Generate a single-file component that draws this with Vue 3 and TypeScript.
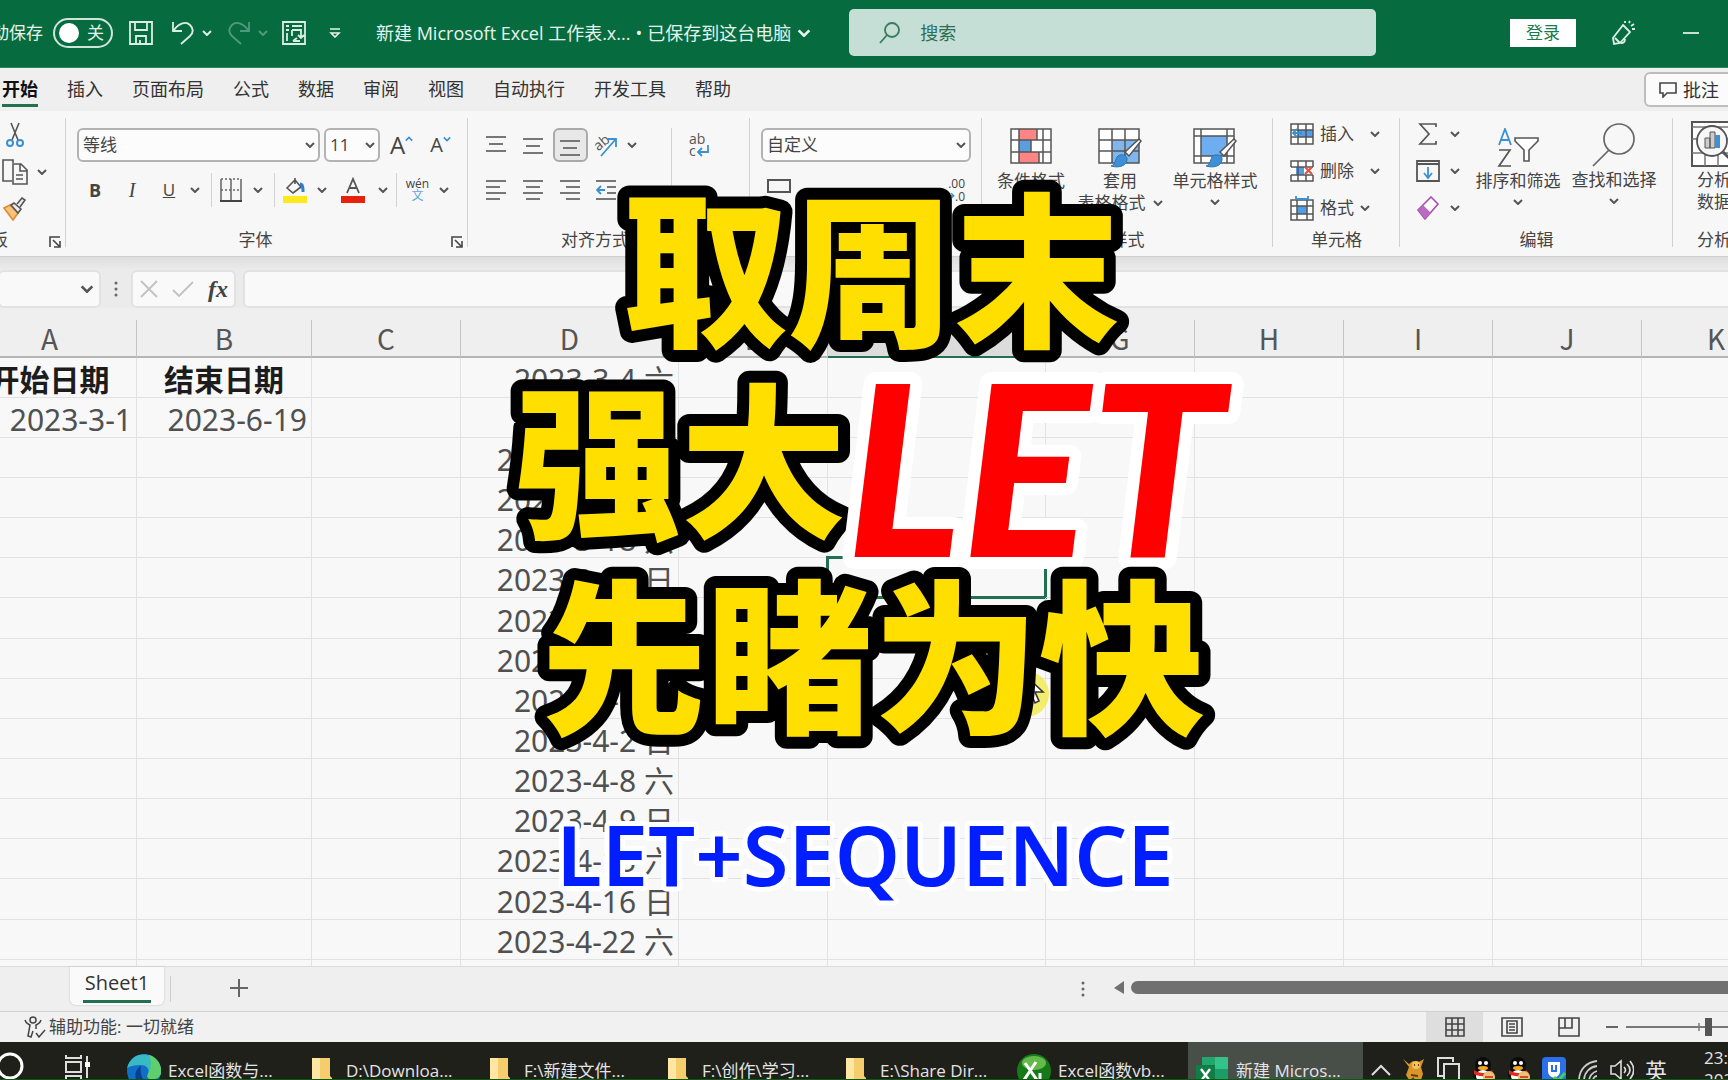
<script setup lang="ts">
import { ref } from 'vue'

interface Row { a?: string; b?: string; d: string }

const tabs: string[] = ['开始', '插入', '页面布局', '公式', '数据', '审阅', '视图', '自动执行', '开发工具', '帮助']
const columns: string[] = ['A', 'B', 'C', 'D', 'E', 'F', 'G', 'H', 'I', 'J', 'K']
const weekends: string[] = [
  '2023-3-4 六', '2023-3-5 日', '2023-3-11 六', '2023-3-12 日', '2023-3-18 六',
  '2023-3-19 日', '2023-3-25 六', '2023-3-26 日', '2023-4-1 六', '2023-4-2 日',
  '2023-4-8 六', '2023-4-9 日', '2023-4-15 六', '2023-4-16 日', '2023-4-22 六'
]
const rows: Row[] = weekends.map((d, i) => ({
  a: i === 0 ? '开始日期' : i === 1 ? '2023-3-1' : '',
  b: i === 0 ? '结束日期' : i === 1 ? '2023-6-19' : '',
  d
}))
const selectedRow = 5
const windows: { kind: string; title: string }[] = [
  { kind: 'edge', title: 'Excel函数与...' },
  { kind: 'folder', title: 'D:\\Downloa...' },
  { kind: 'folder', title: 'F:\\新建文件...' },
  { kind: 'folder', title: 'F:\\创作\\学习...' },
  { kind: 'folder', title: 'E:\\Share Dir...' },
  { kind: 'xl', title: 'Excel函数vb...' },
  { kind: 'excel', title: '新建 Micros...' }
]
const formula = ref('')
const zoom = ref(50)
</script>

<template>
  <div class="app">
    <svg class="defs" aria-hidden="true">
      <symbol id="chev" viewBox="0 0 10 6"><path d="M1 1l4 4 4-4" fill="none" stroke="currentColor" stroke-width="2" /></symbol>
      <symbol id="launch" viewBox="0 0 12 12"><path d="M1 11V1h10M4 4l6 6M11 5v6H5" fill="none" stroke="currentColor" stroke-width="1.6" /></symbol>
      <symbol id="tablebrush" viewBox="0 0 44 40">
        <path d="M27 24l14-13 2 2-12 15z" fill="#fff" stroke="#555" stroke-width="1.5" />
        <path d="M13 38c4-1 4-5 6-9 3-4 9-2 10 1 1 6-6 11-16 8z" fill="#3f8fd6" stroke="#2d75b6" />
      </symbol>
      <symbol id="penguin" viewBox="0 0 24 26">
        <ellipse cx="11" cy="8" rx="8" ry="8" fill="#0b0b0b" /><ellipse cx="11" cy="18" rx="10" ry="9" fill="#111" />
        <circle cx="8" cy="6" r="2" fill="#fff" /><circle cx="14" cy="6" r="2" fill="#fff" />
        <ellipse cx="11" cy="11" rx="5" ry="2" fill="#f5a623" /><ellipse cx="11" cy="19" rx="7" ry="6" fill="#fff" />
        <path d="M2 13c6 4 13 4 18 0l1 3c-6 4-14 4-19 1z" fill="#dd2b20" /><circle cx="17" cy="20" r="6" fill="#f2bd75" /><path d="M13 20h8" stroke="#d24a2a" stroke-width="2" />
      </symbol>
    </svg>

    <header class="titlebar">
      <label class="autosave"><span class="autolabel">自动保存</span>
        <button class="toggle" type="button" aria-label="自动保存"><i></i>关</button></label>
      <button class="tb save" aria-label="保存"><svg width="24" height="24" viewBox="0 0 24 24"><path d="M1 1h22v22H1zM6 1v8h12V1M7 23v-8h10v8M11 23v-4" /></svg></button>
      <button class="tb undo" aria-label="撤消"><svg width="22" height="24" viewBox="0 0 22 24"><path d="M1 1v9h9M2 9C7 2 14 0 18 4s3 8 0 11l-9 8" /></svg></button>
      <svg class="chev"><use href="#chev" /></svg>
      <button class="tb redo dim" aria-label="恢复"><svg width="22" height="24" viewBox="0 0 22 24"><path d="M21 1v9h-9M20 9C15 2 8 0 4 4s-3 8 0 11l9 8" /></svg></button>
      <svg class="chev dim"><use href="#chev" /></svg>
      <button class="tb pivot" aria-label="数据透视表"><svg width="24" height="24" viewBox="0 0 24 24"><path d="M1 1h22v22H1zM4 5h3M10 5h10M4 9h3M5 12v8M10 9h9v8M10 9v6M11 20h7M16 14l3 3 3-3M15 17l-4 3" /></svg></button>
      <svg class="custom" viewBox="0 0 12 10"><path d="M1 1h10M2 5l4 4 4-4z" fill="none" stroke="currentColor" stroke-width="1.6" /></svg>
      <h1 class="doc">新建 Microsoft Excel 工作表.x...<span>•</span>已保存到这台电脑</h1>
      <svg class="docchev"><use href="#chev" /></svg>
      <label class="search">
        <svg width="22" height="22" viewBox="0 0 22 22"><circle cx="13" cy="8" r="7" /><path d="M8 13l-7 8" /></svg>
        <input type="text" placeholder="搜索" aria-label="搜索" />
      </label>
      <button class="login">登录</button>
      <button class="tb pen" aria-label="新增功能"><svg width="24" height="26" viewBox="0 0 24 26"><path d="M12 5l7 7-10 11-6 1-1-6zM4 18l5 5M9 22c2 2 5 1 5-3M14 1v2M18 3l1-2M20 6l3-2M21 9h3" /></svg></button>
      <button class="tb min" aria-label="最小化"><svg width="16" height="4"><path d="M0 2h16" /></svg></button>
    </header>

    <nav class="tabs">
      <button v-for="(t, i) in tabs" :key="t" :class="{ on: i === 0 }">{{ t }}</button>
      <button class="comments"><svg width="18" height="16" viewBox="0 0 18 16"><path d="M1 1h16v10H8l-4 4v-4H1z" fill="none" stroke="#444" stroke-width="1.6" /></svg>批注</button>
    </nav>

    <section class="ribbon">
      <div class="group g-clip">
        <div class="stack">
          <button class="cut" aria-label="剪切"><svg width="18" height="26" viewBox="0 0 18 26"><path d="M5 1l7 17M13 1L6 18" stroke="#555" stroke-width="1.6" /><circle cx="4" cy="21" r="3" fill="none" stroke="#3c8fd0" stroke-width="2" /><circle cx="14" cy="21" r="3" fill="none" stroke="#3c8fd0" stroke-width="2" /></svg></button>
          <button aria-label="复制"><svg width="26" height="26" viewBox="0 0 26 26"><path d="M10 22H1V1h10v3M11 5h8l6 6v14H11zM18 5v7h7M14 16h7M14 20h7" fill="none" stroke="#555" stroke-width="1.6" /></svg><svg class="chev"><use href="#chev" /></svg></button>
          <button aria-label="格式刷"><svg width="24" height="24" viewBox="0 0 24 24"><path d="M2 11l6-3 8 8-5 7z" fill="#f6c27d" stroke="#e08a2c" stroke-width="1.6" /><path d="M9 8l3-2 7 6-3 4zM15 7l5-6 3 2-5 7" fill="#eee" stroke="#555" stroke-width="1.6" /></svg></button>
        </div>
        <footer><span>剪贴板</span><svg class="launch"><use href="#launch" /></svg></footer>
      </div>

      <div class="group g-font">
        <div class="line1">
          <select class="fam" aria-label="字体"><option>等线</option></select>
          <select class="size" aria-label="字号"><option>11</option></select>
          <button class="big" aria-label="增大字号">A<svg class="chev blue up"><use href="#chev" /></svg></button>
          <button class="small" aria-label="减小字号">A<svg class="chev blue"><use href="#chev" /></svg></button>
        </div>
        <div class="line2">
          <button><b>B</b></button><button><em>I</em></button><button><u>U</u></button><svg class="chev"><use href="#chev" /></svg>
          <i class="sep"></i>
          <button aria-label="边框"><svg width="22" height="24" viewBox="0 0 22 24"><path d="M1 1h20M1 12h20" stroke="#666" stroke-width="1.5" stroke-dasharray="2 2" /><path d="M1 1v22h20V1M11 1v22" fill="none" stroke="#666" stroke-width="1.5" /><path d="M0 23h22" stroke="#444" stroke-width="2" /></svg></button><svg class="chev"><use href="#chev" /></svg>
          <i class="sep"></i>
          <button aria-label="填充颜色"><svg width="24" height="26" viewBox="0 0 24 26"><path d="M4 11l8-8 6 7-8 6zM12 1v6" fill="none" stroke="#555" stroke-width="1.6" /><path d="M17 7c3 0 3 4 3 8" stroke="#2f7fd0" stroke-width="3" fill="none" /><path d="M0 19h24v7H0z" fill="#ffe81c" /></svg></button><svg class="chev"><use href="#chev" /></svg>
          <button aria-label="字体颜色"><svg width="24" height="26" viewBox="0 0 24 26"><path d="M6 16l6-14 6 14M8 11h8" fill="none" stroke="#555" stroke-width="1.8" /><path d="M0 19h24v7H0z" fill="#e8210c" /></svg></button><svg class="chev"><use href="#chev" /></svg>
          <i class="sep"></i>
          <button class="wen"><span>wén</span><span class="zi">文</span></button><svg class="chev"><use href="#chev" /></svg>
        </div>
        <footer><span>字体</span><svg class="launch"><use href="#launch" /></svg></footer>
      </div>

      <div class="group g-align">
        <div class="agrid">
          <button aria-label="顶端对齐"><svg width="20" height="20"><path d="M0 2h20M3 9h14M0 16h20" /></svg></button>
          <button aria-label="垂直居中"><svg width="20" height="20"><path d="M0 4h20M3 11h14M0 18h20" /></svg></button>
          <button class="pressed" aria-label="底端对齐"><svg width="20" height="24"><path d="M0 8h20M3 15h14M0 22h20" /></svg></button>
          <button aria-label="方向"><svg width="26" height="26" viewBox="0 0 26 26"><text x="1" y="16" transform="rotate(-40 8 12)" class="ab">ab</text><path d="M8 24L22 8M15 7h8v8" class="bl" /></svg></button>
          <svg class="chev"><use href="#chev" /></svg>
          <i class="sep tall"></i>
          <button aria-label="自动换行" class="wrap"><svg width="24" height="26" viewBox="0 0 24 26"><text x="1" y="12" class="ab">ab</text><text x="1" y="24" class="ab">c</text><path d="M20 13v7h-9M14 16l-4 4 4 4" class="bl" /></svg></button>
          <button class="r2" aria-label="左对齐"><svg width="20" height="22"><path d="M0 2h20M0 8h14M0 14h20M0 20h14" /></svg></button>
          <button class="r2" aria-label="居中"><svg width="20" height="22"><path d="M0 2h20M3 8h14M0 14h20M3 20h14" /></svg></button>
          <button class="r2" aria-label="右对齐"><svg width="20" height="22"><path d="M0 2h20M6 8h14M0 14h20M6 20h14" /></svg></button>
          <button class="r2" aria-label="减少缩进量"><svg width="20" height="22"><path d="M0 2h20M11 8h9M11 14h9M0 20h20" /><path d="M9 11H1M5 7l-4 4 4 4" class="bl" /></svg></button>
        </div>
        <footer><span>对齐方式</span></footer>
      </div>

      <div class="group g-num">
        <select aria-label="数字格式"><option>自定义</option></select>
        <div class="nums">
          <button aria-label="会计数字格式"><svg width="24" height="24"><path d="M1 2h22v12H1z" /></svg></button>
          <button class="dec"><span>.00</span><span><b>→</b>.0</span></button>
        </div>
      </div>

      <div class="group g-style">
        <div class="tiles">
          <button class="tile t1"><svg width="42" height="36" viewBox="0 0 42 36"><path d="M1 1h40v34H1z" fill="#fff" /><path d="M9 1h18v11H9zM9 24h20v11H9z" fill="#ff8585" /><path d="M9 12h12v12H9z" fill="#5a9de0" /><path d="M1 1h40v34H1zM1 12h40M1 24h40M9 1v34M33 1v34M27 1v11M21 12v12M29 24v11" fill="none" stroke="#555" stroke-width="1.5" /></svg><span>条件格式</span></button>
          <button class="tile t2"><svg width="44" height="40" viewBox="0 0 44 40" class="over"><path d="M1 1h40v34H1z" fill="#fff" /><path d="M14 12h27v23H14z" fill="#7fb6ee" /><path d="M1 1h40v34H1zM1 12h40M1 23h40M14 1v34M27 1v34" fill="none" stroke="#555" stroke-width="1.5" /><use href="#tablebrush" /></svg><span>套用</span><span class="row">表格格式<svg class="chev"><use href="#chev" /></svg></span></button>
          <button class="tile t3"><svg width="44" height="40" viewBox="0 0 44 40" class="over"><path d="M1 1h40v34H1z" fill="#fff" /><path d="M8 8h26v20H8z" fill="#6eaef0" /><path d="M1 1h40v34H1zM1 8h40M1 28h40M8 1v34M34 1v34" fill="none" stroke="#555" stroke-width="1.5" /><use href="#tablebrush" /></svg><span>单元格样式</span><svg class="chev low"><use href="#chev" /></svg></button>
        </div>
        <footer><span>样式</span></footer>
      </div>

      <div class="group g-cell">
        <div class="stack">
          <button><svg width="24" height="24" viewBox="0 0 24 24"><path d="M1 2h22v20H1z" fill="#fff" /><path d="M8 8h15v7H8z" fill="#4f9fe8" /><path d="M1 2h22v20H1zM1 8h22M1 15h22M8 2v20M16 2v20" class="gl" /><path d="M12 11H3M7 7l-4 4 4 4" class="bl" /></svg>插入<svg class="chev far"><use href="#chev" /></svg></button>
          <button><svg width="24" height="24" viewBox="0 0 24 24"><path d="M1 2h22v20H1z" fill="#fff" /><path d="M6 8h8v8H6z" fill="#4f9fe8" /><path d="M1 8V2h22v6M1 16v6h22v-6M8 2v20M16 2v6M16 16v6M1 8h22M1 16h22" class="gl" /><path d="M15 8l7 7M22 8l-7 7" stroke="#e0503e" stroke-width="2" /></svg>删除<svg class="chev far"><use href="#chev" /></svg></button>
          <button><svg width="24" height="26" viewBox="0 0 24 26"><path d="M1 5h22v20H1z" fill="#fff" /><path d="M7 11h10v8H7z" fill="#4f9fe8" /><path d="M1 5h22v20H1zM1 11h22M1 19h22M7 5v20M17 5v20" class="gl" /><path d="M6 1v3h12V1" class="bl" /></svg>格式<svg class="chev near"><use href="#chev" /></svg></button>
        </div>
        <footer><span>单元格</span></footer>
      </div>

      <div class="group g-edit">
        <div class="editrow">
          <div class="stack">
            <button aria-label="自动求和"><svg width="24" height="22" viewBox="0 0 24 22"><path d="M20 4V1H4l9 10-9 10h16v-3" fill="none" stroke="#555" stroke-width="1.7" /></svg><svg class="chev"><use href="#chev" /></svg></button>
            <button aria-label="填充"><svg width="24" height="22" viewBox="0 0 24 22"><path d="M1 1h22v20H1zM1 4h22" fill="none" stroke="#555" stroke-width="1.8" /><path d="M12 7v11M8 13l4 5 4-5" class="bl" /></svg><svg class="chev"><use href="#chev" /></svg></button>
            <button aria-label="清除"><svg width="24" height="24" viewBox="0 0 24 24"><path d="M2 14L15 1l7 7L9 23z" fill="#fff" stroke="#a94db0" stroke-width="1.6" /><path d="M2 14l5-5 8 8-6 6z" fill="#b86bc0" /></svg><svg class="chev"><use href="#chev" /></svg></button>
          </div>
          <button class="tile w96"><svg width="42" height="40" viewBox="0 0 42 40" class="over"><path d="M2 17L8 1l6 16M4 12h8" fill="none" stroke="#3c8fd0" stroke-width="1.8" /><path d="M2 22h11L2 38h12" fill="none" stroke="#555" stroke-width="1.7" /><path d="M18 10h23v3l-9 9v11h-5V22l-9-9z" fill="#fff" stroke="#555" stroke-width="1.6" /></svg><span>排序和筛选</span><svg class="chev low"><use href="#chev" /></svg></button>
          <button class="tile w96"><svg width="44" height="44" viewBox="0 0 44 44" class="find"><circle cx="27" cy="16" r="15" fill="none" stroke="#666" stroke-width="1.7" /><path d="M17 27L1 43" stroke="#666" stroke-width="1.7" /></svg><span>查找和选择</span><svg class="chev low"><use href="#chev" /></svg></button>
        </div>
        <footer><span>编辑</span></footer>
      </div>

      <div class="group g-ana">
        <button class="tile"><svg width="46" height="46" viewBox="0 0 46 46" class="find"><path d="M1 1h44v44H1z" fill="#fff" stroke="#555" stroke-width="2" /><path d="M1 6h44M1 18h44M1 32h44M14 30v15M27 30v15" stroke="#777" stroke-width="1.5" /><circle cx="21" cy="20" r="15" fill="#f7f7f7" stroke="#555" stroke-width="1.8" /><path d="M14 17h5v10h-5zM19 11h5v16h-5z" fill="#ccc" stroke="#555" /><path d="M24 14h5v13h-5z" fill="#3f8fd6" /><path d="M32 31l12 12" stroke="#555" stroke-width="3" /></svg><span>分析</span><span>数据</span></button>
        <footer><span>分析</span></footer>
      </div>
    </section>

    <section class="formula">
      <div class="name"><svg class="chev"><use href="#chev" /></svg></div>
      <svg class="dots" width="4" height="18"><circle cx="2" cy="3" r="1.5" /><circle cx="2" cy="9" r="1.5" /><circle cx="2" cy="15" r="1.5" /></svg>
      <div class="fxbox">
        <button aria-label="取消"><svg width="18" height="18" viewBox="0 0 18 18"><path d="M1 1l16 16M17 1L1 17" /></svg></button>
        <button aria-label="输入"><svg width="22" height="16" viewBox="0 0 22 16"><path d="M1 9l6 6L21 1" /></svg></button>
        <button class="fx">fx</button>
      </div>
      <input v-model="formula" type="text" aria-label="编辑栏" />
    </section>

    <main class="sheet">
      <table>
        <colgroup><col v-for="c in columns" :key="c" :class="'c' + c" /></colgroup>
        <thead><tr><th v-for="c in columns" :key="c" scope="col" :class="{ sel: c === 'F' }">{{ c }}</th></tr></thead>
        <tbody>
          <tr v-for="(r, i) in rows" :key="i" :class="{ head: i === 0 }">
            <td>{{ r.a }}</td><td>{{ r.b }}</td><td></td><td>{{ r.d }}</td><td></td>
            <td :class="{ active: i === selectedRow }"></td><td></td><td></td><td></td><td></td><td></td>
          </tr>
          <tr class="rest"><td v-for="c in columns" :key="c"></td></tr>
        </tbody>
      </table>
    </main>

    <section class="sheetbar">
      <i class="nav"></i>
      <button class="stab"><span>Sheet1</span></button>
      <i class="tabsep"></i>
      <button class="add" aria-label="新工作表"><svg width="18" height="18"><path d="M9 0v18M0 9h18" stroke="#666" stroke-width="2" /></svg></button>
      <svg class="dots more" width="4" height="18"><circle cx="2" cy="3" r="1.5" /><circle cx="2" cy="9" r="1.5" /><circle cx="2" cy="15" r="1.5" /></svg>
      <svg class="arrow" width="10" height="13"><path d="M10 0v13L0 7z" fill="#707070" /></svg>
      <div class="scroll"></div>
    </section>

    <section class="status">
      <svg class="acc" width="22" height="22" viewBox="0 0 22 22"><circle cx="9" cy="4" r="3" /><path d="M1 4c1 4 3 4 5 5l-2 11 3 1 2-6M17 4c-1 4-3 4-5 5v4M12 17l3 4 6-7" /></svg>
      <span>辅助功能: 一切就绪</span>
      <div class="views">
        <button class="on" aria-label="普通"><svg width="20" height="20"><path d="M1 1h18v18H1zM7 1v18M13 1v18M1 7h18M1 13h18" /></svg></button>
        <button aria-label="页面布局"><svg width="22" height="20"><path d="M1 1h20v18H1zM6 4h10v12H6zM8 7h6M8 10h6M8 13h6" /></svg></button>
        <button aria-label="分页预览"><svg width="22" height="20"><path d="M1 1h20v18H1zM7 1v10M14 1v10H1" /></svg></button>
      </div>
      <button class="minus" aria-label="缩小"><svg width="12" height="4"><path d="M0 2h12" /></svg></button>
      <div class="slider"><input v-model="zoom" type="range" min="0" max="100" aria-label="缩放" /></div>
    </section>

    <footer class="taskbar">
      <button class="cort" aria-label="Cortana"><svg width="28" height="28"><circle cx="14" cy="14" r="12" fill="none" stroke="#fff" stroke-width="3" /></svg></button>
      <button class="tl" aria-label="任务视图"><svg width="26" height="24" viewBox="0 0 26 24"><path d="M1 0v3h15V0M1 7h15v10H1zM1 24v-3h15v3M22 1v22" fill="none" stroke="#ddd" stroke-width="2" /><path d="M20 7h5v5h-5z" fill="#fff" /></svg></button>
      <button v-for="w in windows" :key="w.title" class="win" :class="w.kind">
        <span class="ic">
          <svg v-if="w.kind === 'edge'" width="34" height="34" viewBox="0 0 34 34"><circle cx="17" cy="17" r="17" fill="#0f6fc6" /><path d="M0 14C3 3 12-1 21 1c9 2 14 10 13 18-1 5-6 7-11 6-3-1-3-3-2-5 2-4-1-9-7-9S3 12 0 14z" fill="#38b9c4" /><path d="M22 1c8 2 13 10 12 18-1 5-6 7-11 6-3-1-3-3-2-5 3-6 4-12 1-19z" fill="#5fcf6d" /><path d="M14 12c-6 3-8 12-2 18 4 3 10 4 15 1-8 0-15-7-13-19z" fill="#0a3f8f" /></svg>
          <svg v-else-if="w.kind === 'folder'" width="20" height="30" viewBox="0 0 20 30"><path d="M0 1h18v18l2 2v9H0z" fill="#f5cd6c" /><path d="M0 1h8v29H0z" fill="#ffe7a3" /></svg>
          <svg v-else-if="w.kind === 'xl'" width="34" height="34" viewBox="0 0 34 34"><circle cx="17" cy="17" r="17" fill="#177a18" /><ellipse cx="17" cy="9" rx="12" ry="7" fill="#65b84a" /><path d="M8 9l12 17M19 8L7 26M23 19v9h7" fill="none" stroke="#fff" stroke-width="3" /></svg>
          <svg v-else width="32" height="32" viewBox="0 0 32 32"><path d="M6 0h26v32H6z" fill="#1c9c66" /><path d="M19 0h13v12H19z" fill="#35c28a" /><path d="M6 0h13v12H6z" fill="#23a56e" /><path d="M0 8h19v20H0z" fill="#107c48" /><path d="M5 12l9 12M14 12L5 24" stroke="#fff" stroke-width="2.4" /></svg>
        </span>{{ w.title }}
      </button>
      <div class="tray">
        <svg width="20" height="12" viewBox="0 0 20 12"><path d="M1 11l9-9 9 9" fill="none" stroke="#ddd" stroke-width="2" /></svg>
        <svg width="24" height="26" viewBox="0 0 24 26"><path d="M1 2l6 8-3 8 5 8h9l3-9-2-7 3-8-7 4-4-2-4 3z" fill="#d9962b" /><circle cx="14" cy="8" r="4" fill="#f5c45a" /><path d="M9 18l7 1M12 8h1M16 8h1M8 24l4-3" stroke="#6b3a0c" stroke-width="2" /></svg>
        <svg width="24" height="26" viewBox="0 0 24 26"><path d="M6 19H1V1h15v4M7 7h15v19H7z" fill="none" stroke="#ddd" stroke-width="2" /></svg>
        <svg width="24" height="26"><use href="#penguin" /></svg>
        <svg width="24" height="26"><use href="#penguin" /></svg>
        <svg width="24" height="26" viewBox="0 0 24 26"><rect width="24" height="26" rx="4" fill="#2d6fe8" /><path d="M6 5h12v9c0 4-3 6-6 7-3-1-6-3-6-7z" fill="#fff" /><path d="M10 8v6h4V8" fill="none" stroke="#2d6fe8" stroke-width="2" /><path d="M12 20l4 4 7-8" fill="none" stroke="#3ad06a" stroke-width="3" /></svg>
        <svg width="22" height="22" viewBox="0 0 22 22"><path d="M2 22C2 10 10 3 20 2M7 22C7 13 13 8 20 7M12 22c0-5 4-9 8-10M16 22c0-3 2-5 4-5" fill="none" stroke="#ccc" stroke-width="1.8" /></svg>
        <svg width="24" height="22" viewBox="0 0 24 22"><path d="M1 7h4l6-5v18l-6-5H1zM14 8c2 2 2 4 0 6M17 5c4 4 4 8 0 12M20 2c5 6 5 12 0 18" fill="none" stroke="#ddd" stroke-width="1.6" /></svg>
        <span class="ime">英</span>
        <span class="clock"><span>23:13</span><span>2023</span></span>
      </div>
    </footer>

    <svg class="pointer" width="48" height="48" viewBox="0 0 48 48"><circle cx="24" cy="24" r="23" fill="#f3ea5c" opacity="0.9" /><path d="M22 4v25l7-6 4 10 4-2-4-9h8z" fill="#fff" stroke="#333" stroke-width="1.6" /></svg>

    <svg class="headline">
      <text class="cn" x="50%" dx="7" y="334">取周末</text>
      <text class="cn" x="50%" dx="5" y="525">强大<tspan class="let" dy="32">LET</tspan></text>
      <text class="cn" x="50%" dx="9" y="721">先睹为快</text>
      <text class="sub" x="50%" dx="1" y="886">LET+SEQUENCE</text>
    </svg>
  </div>
</template>

<style>
body { margin: 0; }
</style>

<style scoped>
* { box-sizing: border-box; }
.app { position: relative; display: flex; flex-direction: column; min-height: 100vh; overflow: hidden; background: #efefef; color: #444; font: 17px/22px "Open Sans", "Noto Sans CJK SC", sans-serif; }
.defs { position: absolute; width: 0; height: 0; }
button { display: flex; align-items: center; justify-content: center; padding: 0; border: 0; background: none; color: inherit; font: inherit; white-space: nowrap; }
svg { flex: none; }
.chev { width: 10px; height: 6px; color: #555; }
.blue { color: #3c8fd0; }

.titlebar { display: flex; align-items: center; height: 68px; padding-bottom: 2px; background: #066c40; color: #e6f3ec; border-bottom: 1px solid #2d8560; white-space: nowrap; }
.autosave { display: flex; align-items: center; gap: 10px; margin-left: -25px; }
.toggle { justify-content: space-between; width: 60px; height: 30px; padding: 0 7px 0 4px; border: 2px solid #cfe5da; border-radius: 15px; }
.toggle i { width: 20px; height: 20px; border-radius: 50%; background: #fff; }
.tb svg { fill: none; stroke: #dcefe5; stroke-width: 1.8; }
.titlebar .chev { color: #dcefe5; }
.titlebar .dim { opacity: 0.35; }
.save { margin-left: 16px; }
.undo { margin: 0 8px 0 19px; }
.redo { margin: 0 8px 0 16px; }
.pivot { margin-left: 14px; }
.custom { width: 12px; height: 10px; margin-left: 23px; }
.doc { margin: 0 0 0 35px; font-size: 18px; font-weight: 400; }
.doc span { margin: 0 5px; }
.docchev { width: 14px; height: 8px; margin-left: 6px; }
.search { display: flex; flex: 0 1 527px; align-items: center; gap: 17px; height: 47px; margin-left: 38px; padding-left: 30px; border-radius: 5px; background: #c5dfd7; }
.search svg { fill: none; stroke: #3a7a5e; stroke-width: 1.8; }
.search input { flex: 1; min-width: 0; border: 0; outline: 0; background: none; font: inherit; font-size: 18px; }
.search input::placeholder { color: #2f6e52; opacity: 1; }
.login { width: 66px; height: 28px; margin-left: auto; background: #fff; color: #1b7a50; }
.pen { margin: 0 48px 0 35px; }
.min { margin-right: 29px; }

.tabs { display: flex; align-items: center; gap: 29px; height: 43px; padding-left: 2px; color: #333; font-size: 18px; }
.tabs button { height: 35px; padding-top: 2px; border-bottom: 3px solid transparent; }
.tabs .on { border-color: #217050; color: #111; font-weight: 700; }
.tabs .comments { gap: 6px; width: 90px; height: 35px; margin: 0 -6px 0 auto; padding: 0; border: 2px solid #bdbdbd; border-radius: 6px; background: #fbfbfb; }

.ribbon { display: flex; height: 146px; background: #f7f7f7; border-bottom: 1px solid #cfcfcf; }
.group { position: relative; display: flex; flex: none; flex-direction: column; }
.group::after { content: ""; position: absolute; top: 7px; right: 0; bottom: 9px; width: 1px; background: #d2d2d2; }
.group footer { display: flex; align-items: center; justify-content: center; height: 26px; margin-top: auto; margin-bottom: 3px; }
.launch { position: absolute; right: 5px; bottom: 8px; width: 12px; height: 12px; }
.g-clip { width: 66px; padding-top: 5px; }
.g-clip footer { justify-content: flex-start; margin-left: -43px; }
.g-clip button { justify-content: flex-start; padding-left: 2px; gap: 9px; }
.g-clip .cut { padding-left: 6px; }
.stack { display: flex; flex-direction: column; }
.stack button { height: 37px; }
.g-font { width: 402px; padding: 17px 0 0 11px; }
.g-font footer { margin-right: 34px; }
select { height: 34px; padding: 0 4px; border: 2px solid #b3b3b3; border-radius: 6px; color: #444; font: inherit; appearance: none; background: #fcfcfc url("data:image/svg+xml,%3Csvg xmlns='http://www.w3.org/2000/svg' width='10' height='6'%3E%3Cpath d='M1 1l4 4 4-4' fill='none' stroke='%23555' stroke-width='2'/%3E%3C/svg%3E") no-repeat right 3px center; }
.line1 { display: flex; align-items: center; }
.fam { width: 243px; }
.size { width: 56px; margin-left: 4px; }
.big, .small { align-items: flex-start; font-size: 24px; line-height: 28px; }
.small { margin-left: 17px; font-size: 20px; }
.big { margin-left: 10px; }
.big .chev, .small .chev { width: 8px; margin-top: 5px; }
.up { transform: rotate(180deg); }
.line2 { display: grid; grid-template-columns: 36px 38px 36px 16px 16px 24px 30px 2px 40px 14px 48px 11px 16px 27px 26px; align-items: center; justify-items: center; height: 34px; margin-top: 11px; }
.line2 b { font-size: 18px; }
.line2 em { font-family: "Liberation Serif", serif; font-size: 20px; }
.sep { width: 1px; height: 34px; background: #d2d2d2; }
.wen { flex-direction: column; font-size: 12px; line-height: 12px; }
.zi { color: #5aa6de; }
.g-align { width: 282px; padding: 17px 0 0 10px; }
.agrid { display: grid; grid-template-columns: 36px 38px 36px 36px 16px 32px 56px; grid-template-rows: 34px 34px; row-gap: 11px; align-items: center; justify-items: center; }
.agrid svg path { fill: none; stroke: #777; stroke-width: 2; }
.pressed { width: 35px; height: 34px; border: 2px solid #aaa; border-radius: 6px; background: #e8e8e8; }
.tall { grid-row: 1 / 3; grid-column: 6; justify-self: end; height: 79px; }
.wrap { grid-column: 7; grid-row: 1; }
.r2 { grid-row: 2; }
.ab { font-size: 14px; fill: #555; }
.bl, .agrid svg .bl { fill: none; stroke: #3c8fd0; stroke-width: 1.8; }
.gl { fill: none; stroke: #555; stroke-width: 1.5; }
.g-align footer { margin-right: 38px; }
.g-num { width: 232px; padding: 17px 11px 0; }
.nums { display: flex; justify-content: space-between; height: 34px; margin-top: 11px; padding: 0 6px; }
.nums path { fill: none; stroke: #555; stroke-width: 2; }
.dec { flex-direction: column; align-items: flex-end; font-size: 12px; line-height: 13px; }
.dec b { color: #3c8fd0; }
.tiles, .editrow { display: flex; }
.tile { flex-direction: column; justify-content: flex-start; height: 103px; padding-top: 17px; }
.tile > svg:first-child { margin-bottom: 6px; }
.tile > svg.over { margin-bottom: 2px; }
.tile > svg.find { margin: -5px 0 2px; }
.low { margin-top: 7px; }
.tile .row { display: flex; align-items: center; gap: 7px; }
.g-style { width: 291px; }
.t1 { width: 98px; }
.t2 { width: 80px; }
.t3 { width: 110px; }
.g-cell { width: 127px; padding-top: 4px; }
.g-cell .stack { padding-left: 17px; }
.g-cell .stack button { justify-content: flex-start; gap: 6px; }
.far { margin-left: 10px; }
.g-edit { width: 273px; }
.g-edit .stack { width: 70px; padding: 4px 0 0 16px; }
.g-edit .stack button { justify-content: flex-start; gap: 10px; }
.w96 { width: 96px; }
.g-ana { flex: 1 0 55px; width: 55px; align-items: flex-start; padding-left: 18px; }
.g-ana::after { display: none; }
.g-ana footer { width: 46px; }
.g-ana .tile > svg.find { margin: -7px 0 2px; }

.formula { display: flex; align-items: center; height: 51px; padding-top: 13px; background: linear-gradient(#dedede, #ebebeb 13px); }
.name, .fxbox, .formula input { height: 38px; border: 2px solid #e2e2e2; border-radius: 6px; background: #f9f9f9; }
.name { display: flex; align-items: center; justify-content: flex-end; width: 103px; margin-left: -2px; padding-right: 5px; }
.name .chev { width: 14px; height: 8px; }
.dots { margin: 0 13px; fill: #666; }
.fxbox { display: flex; align-items: center; justify-content: space-between; width: 105px; padding: 0 6px 0 7px; }
.fxbox path { fill: none; stroke: #c2c2c2; stroke-width: 1.8; }
.fx { font: italic 700 24px/24px "Liberation Serif", serif; }
.formula input { flex: 1; min-width: 0; margin: 0 -4px 0 7px; padding: 0 8px; outline: 0; font: inherit; }

.sheet { flex: 1; overflow: hidden; padding-top: 12px; }
table { width: calc(100% + 100px); margin-left: -37px; border-spacing: 0; table-layout: fixed; background: #f8f8f8; font-family: "Noto Sans", "Noto Sans CJK SC", sans-serif; }
.cA { width: 174px; }
.cB { width: 175px; }
.cD, .cF { width: 218px; }
.cC, .cE, .cG, .cH, .cI, .cJ { width: 149px; }
th { height: 38px; padding: 0; border-right: 1px solid #c4c4c4; border-bottom: 2px solid #b5b5b5; background: #efefef; font: 400 28px/34px "Noto Sans CJK SC", sans-serif; color: #555; }
th.sel { background: #dcdcdc; border-bottom-color: #217050; }
td { position: relative; height: 40px; padding: 4px 4px 0 0; border-right: 1px solid #e2e2e2; border-bottom: 1px solid #e2e2e2; color: #505050; font-size: 30px; font-weight: 400; line-height: 35px; text-align: right; white-space: nowrap; }
.head td:nth-child(-n + 2) { padding-right: 0; font-weight: 700; text-align: center; color: #1c1c1c; }
tr:nth-child(7n) td { height: 41px; }
.rest td, .rest { height: 6px; padding: 0; border-bottom: 0; }
.active::after { content: ""; position: absolute; inset: -2px; border: 3px solid #217050; }

.sheetbar { display: flex; align-items: center; height: 46px; border-top: 1px solid #dcdcdc; border-bottom: 1px solid #d0d0d0; background: #efefef; }
.nav { width: 70px; }
.stab { width: 94px; height: 38px; align-self: flex-start; border-radius: 0 0 6px 6px; background: #fafafa; box-shadow: 0 0 2px #bbb; color: #333; font-size: 20px; }
.stab span { padding: 1px 2px 4px; border-bottom: 3px solid #217050; line-height: 26px; }
.tabsep { width: 1px; height: 26px; margin-left: 6px; background: #d0d0d0; }
.add { margin: 0 0 2px 59px; }
.more { margin: 0 29px 0 833px; }
.arrow, .scroll { margin-bottom: 3px; }
.scroll { flex: 1; height: 13px; margin-left: 7px; border-radius: 7px 0 0 7px; background: #707070; }

.status { display: flex; align-items: center; height: 30px; padding-left: 24px; background: #f1f1f1; }
.acc { margin-right: 3px; fill: none; stroke: #444; stroke-width: 1.5; }
.views { display: flex; align-self: stretch; margin-left: auto; }
.views button { width: 57px; }
.views .on { background: #dedede; }
.views path, .minus path { fill: none; stroke: #444; stroke-width: 1.6; }
.minus { margin: 0 8px 0 9px; }
.slider { width: 102px; overflow: hidden; }
.slider input { display: block; width: 165px; height: 20px; margin: 0; appearance: none; background: linear-gradient(#777, #777) 0 9px / 100% 2px no-repeat, linear-gradient(#999, #999) 72px 6px / 2px 8px no-repeat; }
.slider input::-webkit-slider-thumb { width: 7px; height: 18px; appearance: none; background: #555; }

.taskbar { display: flex; height: 38px; overflow: hidden; border-bottom: 1px solid #0a5a12; background: #20201b; color: #e4e4e4; white-space: nowrap; }
.cort { width: 25px; margin: 10px 0 0 -1px; justify-content: flex-end; }
.tl { width: 96px; margin-top: 12px; padding-left: 41px; justify-content: flex-start; }
.win { flex: 0 1 178px; justify-content: flex-start; align-items: flex-start; padding: 18px 0 0 7px; overflow: hidden; }
.win.excel { background: #484e48; flex-basis: 175px; }
.ic { display: flex; flex: none; justify-content: center; width: 34px; height: 34px; margin: -6px 7px 0 0; }
.folder .ic, .excel .ic { margin-top: -3px; }
.tray { display: flex; flex: none; gap: 11px; align-items: center; margin-left: auto; padding-top: 18px; }
.ime { font-size: 22px; }
.clock { display: flex; flex-direction: column; width: 24px; height: 38px; margin: -8px 0 0 26px; overflow: hidden; }

.pointer { position: absolute; left: 1002px; top: 670px; }
.headline { position: absolute; inset: 0; width: 100%; height: 100%; pointer-events: none; overflow: hidden; }
.headline text { text-anchor: middle; paint-order: stroke; stroke-linejoin: round; }
.headline .cn { font: 900 166px "Noto Sans CJK SC", sans-serif; fill: #ffdf00; stroke: #000; stroke-width: 24px; }
.headline .let { font: italic 900 238px "Lato", sans-serif; fill: #f00; stroke: #fff; stroke-width: 24px; }
.headline .sub { font: 600 83px "Noto Sans", sans-serif; fill: #001eff; stroke: #fff; stroke-width: 10px; }
</style>
